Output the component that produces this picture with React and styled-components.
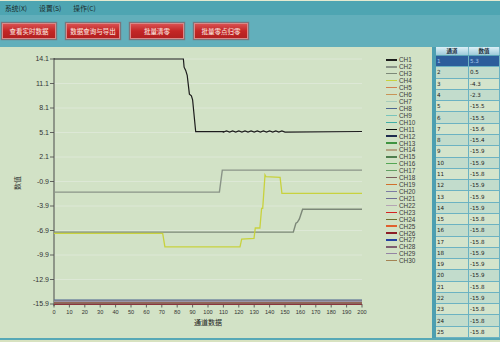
import styled, { createGlobalStyle } from 'styled-components';

const GlobalStyle = createGlobalStyle`
  body {
    margin: 0;
    background: #d2e2c6;
    font-family: "Noto Sans CJK SC", "DejaVu Sans", sans-serif;
  }
`;

// chart scale: t is channel index 0..200, v is value -15.9..14.1
const X = (t) => 54 + t * 1.54;
const Y = (v) => 59 + (14.1 - v) * (245 / 30);
const pts = (arr) => arr.map(([t, v]) => `${X(t).toFixed(1)},${Y(v).toFixed(1)}`).join(' ');

const COLORS = [
  '#1c1c1c', '#8a9488', '#7c8878', '#c8d23e', '#d08050', '#c89456', '#a8ccbc', '#4e6890',
  '#78c4bc', '#40aea6', '#111111', '#1e2c4e', '#3f9440', '#b4a482', '#4e7e4e', '#54a654',
  '#62a062', '#7a5c5c', '#d0702c', '#7c7ca4', '#6e6e94', '#b4a4b4', '#d42222', '#6e6e2e',
  '#e0602e', '#8c1e26', '#2442a2', '#7e5e70', '#9484a4', '#a48454',
];

const VALUES = [
  5.3, 0.5, -4.3, -2.3, -15.5, -15.5, -15.6, -15.4, -15.9, -15.9, -15.8, -15.9, -15.9,
  -15.9, -15.8, -15.8, -15.8, -15.9, -15.9, -15.9, -15.8, -15.9, -15.8, -15.8, -15.8,
];

// small ripple on CH1 between 110 and 150
const wiggle = [];
for (let i = 0; i <= 20; i++) wiggle.push([110 + i * 2, 5.2 + (i % 2 ? 0.09 : -0.05)]);

const CH1 = [
  [0, 14.1], [84, 14.1], [84.5, 13.1], [85.5, 12.7], [86.5, 12.1], [87.9, 9.8],
  [89.2, 9.6], [90, 9.1], [92, 5.2], [110, 5.2], ...wiggle, [200, 5.22],
];
const CH2 = [[0, -2.2], [107.4, -2.2], [109.3, 0.5], [200, 0.5]];
const CH3 = [
  [0, -7.1], [155.4, -7.1], [157.1, -6.0], [158, -5.9], [159.3, -5.5], [161.4, -4.3], [200, -4.3],
];
const CH4 = [
  [0, -7.25], [70.6, -7.25], [72, -8.9], [120.8, -8.9], [121.9, -7.94], [129.9, -7.86],
  [130.7, -6.6], [133.7, -6.6], [134.8, -4.2], [135.5, -4.2], [137, -0.1], [137.6, -0.3],
  [146.8, -0.4], [148, -2.34], [200, -2.34],
];

const LOW = [
  [5, -15.5], [6, -15.5], [7, -15.6], [9, -15.9], [10, -15.9], [11, -15.8], [12, -15.9],
  [13, -15.9], [14, -15.9], [15, -15.8], [16, -15.8], [17, -15.8], [18, -15.9], [19, -15.9],
  [20, -15.9], [21, -15.8], [22, -15.9], [23, -15.8], [24, -15.8], [25, -15.8], [27, -15.9],
  [28, -15.8], [29, -15.6], [30, -15.9], [20, -15.45], [26, -15.95], [8, -15.4],
];

const YTICKS = [14.1, 11.1, 8.1, 5.1, 2.1, -0.9, -3.9, -6.9, -9.9, -12.9, -15.9];
const XTICKS = Array.from({ length: 21 }, (_, i) => i * 10);

const Chart = () => (
  <ChartSvg width="380" height="291" viewBox="0 47 380 291">
    {YTICKS.map((v) => (
      <g key={v}>
        <line x1={X(0)} x2={X(200)} y1={Y(v)} y2={Y(v)} stroke="#dde8d6" strokeWidth="1" />
        <line x1="50" x2="54" y1={Y(v)} y2={Y(v)} stroke="#444" strokeWidth="0.8" />
        <text x="49" y={Y(v) + 2.4} textAnchor="end" fontSize="7" fill="#333">
          {v.toFixed(1)}
        </text>
      </g>
    ))}
    {XTICKS.map((t) => (
      <g key={t}>
        <line x1={X(t)} x2={X(t)} y1="304" y2="307.5" stroke="#444" strokeWidth="0.8" />
        <text x={X(t)} y="314" textAnchor="middle" fontSize="5.6" fill="#333">{t}</text>
      </g>
    ))}
    <line x1="54" x2="54" y1="58" y2="306" stroke="#4a4a4a" strokeWidth="1" />
    <line x1="54" x2={X(200)} y1="304.5" y2="304.5" stroke="#6a3a3a" strokeWidth="0.8" />
    {LOW.map(([ch, v], i) => (
      <line key={i} x1={X(0)} x2={X(200)} y1={Y(v)} y2={Y(v)} stroke={COLORS[ch - 1]} strokeWidth="0.8" />
    ))}
    <polyline points={pts(CH3)} fill="none" stroke={COLORS[2]} strokeWidth="1.4" />
    <polyline points={pts(CH2)} fill="none" stroke={COLORS[1]} strokeWidth="1.4" />
    <polyline points={pts(CH4)} fill="none" stroke={COLORS[3]} strokeWidth="1.3" />
    <polyline points={pts(CH1)} fill="none" stroke={COLORS[0]} strokeWidth="1.2" />
    <text x="20" y="183" fontSize="7" fill="#333" textAnchor="middle" transform="rotate(-90 20 183)">
      数值
    </text>
    <text x="208" y="325" fontSize="7" fill="#222" textAnchor="middle">通道数据</text>
  </ChartSvg>
);

const App = () => {
  return (
    <Window>
      <GlobalStyle />
      <TopStrip />
      <MenuBar>
        <MenuItem>系统(X)</MenuItem>
        <MenuItem>设置(S)</MenuItem>
        <MenuItem>操作(C)</MenuItem>
      </MenuBar>
      <Toolbar>
        <RedButton>查看实时数据</RedButton>
        <RedButton>数据查询与导出</RedButton>
        <RedButton>批量清零</RedButton>
        <RedButton>批量零点归零</RedButton>
      </Toolbar>
      <Body>
        <ChartPanel>
          <Chart />
          <Legend>
            {COLORS.map((c, i) => (
              <LegendItem key={i}>
                <Swatch $color={c} />
                CH{i + 1}
              </LegendItem>
            ))}
          </Legend>
        </ChartPanel>
        <TablePanel>
          <HeadRow>
            <HeadCell>通道</HeadCell>
            <HeadCell>数值</HeadCell>
          </HeadRow>
          {VALUES.map((v, i) => (
            <Row key={i} $selected={i === 0} $alt={i % 2 === 1}>
              <Cell>{i + 1}</Cell>
              <Cell>{v.toFixed(1)}</Cell>
            </Row>
          ))}
        </TablePanel>
      </Body>
      <BottomStrip />
    </Window>
  );
};

const Window = styled.div`
  width: 500px;
  height: 342px;
  display: flex;
  flex-direction: column;
  overflow: hidden;
  background: #d2e2c6;
`;
const TopStrip = styled.div`
  height: 1px;
  background: #e4ead0;
`;
const MenuBar = styled.div`
  height: 14px;
  display: flex;
  align-items: center;
  gap: 12px;
  padding-left: 5px;
  background: #4ea5b2;
`;
const MenuItem = styled.span`
  font-size: 6.8px;
  color: #1a2a2a;
`;
const Toolbar = styled.div`
  height: 32px;
  display: flex;
  align-items: center;
  gap: 10px;
  padding-left: 2px;
  background: #62afbb;
`;
const RedButton = styled.button`
  width: 54px;
  height: 16px;
  padding: 0;
  border: 1px solid #d88a8a;
  box-shadow: 0 0 1px 1px rgba(150, 60, 60, 0.5);
  background: linear-gradient(#d85050, #c42626 50%, #b22020);
  color: #f6dcd4;
  font-family: "Noto Sans CJK SC", sans-serif;
  font-size: 6.5px;
  font-weight: 500;
  display: flex;
  align-items: center;
  justify-content: center;
`;
const Body = styled.div`
  flex: 1;
  display: flex;
  border-bottom: 2px solid #56a8b6;
  min-height: 0;
`;
const ChartPanel = styled.div`
  flex: 1;
  display: flex;
`;
const ChartSvg = styled.svg`
  display: block;
  flex: none;
  font-family: "Liberation Sans", "Noto Sans CJK SC", sans-serif;
`;
const Legend = styled.div`
  display: flex;
  flex-direction: column;
  padding-top: 9.5px;
  margin-left: 6px;
`;
const LegendItem = styled.div`
  height: 6.93px;
  display: flex;
  align-items: center;
  font-family: "Liberation Sans", sans-serif;
  font-size: 6.4px;
  color: #3a3a3a;
`;
const Swatch = styled.span`
  width: 11px;
  height: 1.3px;
  margin-right: 2px;
  background: ${(p) => p.$color};
`;
const TablePanel = styled.div`
  width: 64px;
  border-left: 4px solid #4d9fb1;
  display: flex;
  flex-direction: column;
`;
const HeadRow = styled.div`
  height: 8px;
  display: grid;
  grid-template-columns: 33px 1fr;
  background: linear-gradient(#dcf0f6, #9ccada);
  border-bottom: 1px solid #5aa4b6;
`;
const HeadCell = styled.div`
  font-size: 5.5px;
  font-weight: 700;
  color: #1e2e3a;
  display: flex;
  align-items: center;
  justify-content: center;
  border-right: 1px solid #7ab8c8;
`;
const Row = styled.div`
  height: 11.3px;
  box-sizing: border-box;
  display: grid;
  grid-template-columns: 33px 1fr;
  border-bottom: 1px solid #6cb2c2;
  background: ${(p) => (p.$selected ? '#2c5d9b' : p.$alt ? '#c2dccc' : '#d4e4cc')};
  color: ${(p) => (p.$selected ? '#a8c8ec' : '#222')};
`;
const Cell = styled.div`
  font-family: "DejaVu Sans", sans-serif;
  font-size: 5.6px;
  display: flex;
  align-items: center;
  padding-left: 1px;
  border-right: 1px solid #6cb2c2;
`;
const BottomStrip = styled.div`
  height: 2px;
  background: #d8e2c0;
`;

export default App;
